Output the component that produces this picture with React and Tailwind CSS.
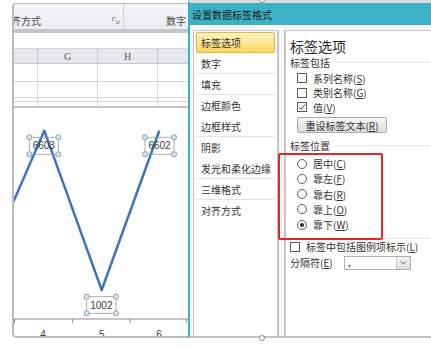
import React from 'react';

const cjk = "font-['Noto_Sans_CJK_SC','Noto_Sans',sans-serif]";

function U({ c }) {
  return <span className="underline decoration-1 underline-offset-[1px]">{c}</span>;
}

function CheckBox({ checked }) {
  return (
    <span className="w-[10px] h-[10px] border border-[#5e5e5e] bg-white flex items-center justify-center shrink-0">
      {checked && (
        <svg width="8" height="8" viewBox="0 0 8 8">
          <path d="M1 4.2 L3.1 6.3 L7 1.6" fill="none" stroke="#3a3a3a" strokeWidth="1" />
        </svg>
      )}
    </span>
  );
}

function Radio({ checked }) {
  return (
    <span className="w-[10px] h-[10px] rounded-full border border-[#5e5e5e] bg-white flex items-center justify-center shrink-0">
      {checked && <span className="w-[4px] h-[4px] rounded-full bg-[#2e2e2e]" />}
    </span>
  );
}

const nav = [
  { t: '标签选项', sel: true },
  { t: '数字', sep: true },
  { t: '填充', sep: true },
  { t: '边框颜色' },
  { t: '边框样式', sep: true },
  { t: '阴影' },
  { t: '发光和柔化边缘', sep: true },
  { t: '三维格式', sep: true },
  { t: '对齐方式' },
];

function GridRow({ h }) {
  return (
    <div className={`${h} flex shrink-0 border-b border-[#d4d8dd]`}>
      <div className="w-[24px] border-r border-[#d4d8dd]" />
      <div className="w-[60px] border-r border-[#d4d8dd]" />
      <div className="w-[60px] border-r border-[#d4d8dd]" />
      <div className="flex-1" />
    </div>
  );
}

function DataLabel({ x, y, w, h, text }) {
  const hs = [
    [x, y],
    [x + w, y],
    [x, y + h],
    [x + w, y + h],
  ];
  return (
    <g>
      <rect x={x} y={y} width={w} height={h} fill="none" stroke="#9a9a9a" strokeWidth="0.8" />
      <text x={x + w / 2} y={y + h / 2 + 3.6} textAnchor="middle" fontSize="10" fill="#3c3c3c" fontFamily="'Liberation Sans', Arial, sans-serif">
        {text}
      </text>
      {hs.map(([cx, cy], i) => (
        <circle key={i} cx={cx} cy={cy} r="2.6" fill="#d3e4f1" stroke="#74a3ca" strokeWidth="0.9" />
      ))}
    </g>
  );
}

function Chart() {
  return (
    <svg className="absolute inset-0" width="175" height="228" viewBox="0 0 175 228">
      <polyline
        points="-12,120 30.3,22.7 87.7,182 145.3,22.7"
        fill="none"
        stroke="#3f74bf"
        strokeWidth="2.5"
        strokeLinejoin="round"
      />
      <DataLabel x={15.3} y={29.3} w={29} h={17} text="6603" />
      <DataLabel x={131} y={29.3} w={29} h={17} text="6602" />
      <DataLabel x={72.7} y={188.7} w={29.3} h={16.6} text="1002" />
      <line x1="0" y1="211" x2="175" y2="211" stroke="#8c8c8c" strokeWidth="1" />
      {[0.5, 58.7, 116, 172.7].map((t, i) => (
        <line key={i} x1={t} y1="211" x2={t} y2="215" stroke="#8c8c8c" strokeWidth="1" />
      ))}
      {[
        [29, '4'],
        [87.7, '5'],
        [145, '6'],
      ].map(([x, s]) => (
        <text key={s} x={x} y="230" textAnchor="middle" fontSize="10" fill="#404040" fontFamily="'Liberation Sans', Arial, sans-serif">
          {s}
        </text>
      ))}
    </svg>
  );
}

export default function App() {
  return (
    <div className={`relative w-[431px] h-[349px] bg-white overflow-hidden ${cjk}`}>
      {/* spreadsheet window */}
      <div className="pl-[12px] pt-[3px]">
        <div className="w-[177px] h-[335px] border-l-2 border-t border-b-2 border-[#b8bbbf] rounded-tl-[4px] rounded-bl-[5px] overflow-hidden flex flex-col">
          {/* ribbon */}
          <div className="h-[25px] shrink-0 flex bg-linear-to-b from-[#f7f8fa] to-[#e9ecf0] text-[10px] text-[#4a4a4a]">
            <div className="w-[109px] flex items-end justify-between pb-[1px] overflow-hidden">
              <span className="-ml-[3px] leading-[14px]">齐方式</span>
              <svg width="8" height="7" viewBox="0 0 8 7" className="mr-[3px] mb-[4px]">
                <path d="M0.5 0.5 H4 M0.5 0.5 V4" stroke="#9ea3a8" strokeWidth="1" fill="none" />
                <path d="M3 3 L7 6.5 M7 3.5 V6.5 H4" stroke="#9ea3a8" strokeWidth="1" fill="none" />
              </svg>
            </div>
            <div className="w-px bg-[#cdd1d6]" />
            <div className="flex-1 flex items-end pb-[1px] pl-[42px]">
              <span className="leading-[14px]">数字</span>
            </div>
          </div>
          <div className="h-[4px] shrink-0 bg-[#c3c7cc]" />
          <div className="h-[16px] shrink-0 bg-white border-b border-[#cfd3d8]" />
          {/* column header */}
          <div className="h-[15px] shrink-0 flex bg-[#e5e9ee] border-b border-[#c5c9ce] text-[10px] text-[#555] font-['Liberation_Serif',serif]">
            <div className="w-[24px] border-r border-[#c5c9ce]" />
            <div className="w-[60px] border-r border-[#c5c9ce] flex items-center justify-center">G</div>
            <div className="w-[60px] border-r border-[#c5c9ce] flex items-center justify-center">H</div>
            <div className="flex-1" />
          </div>
          <GridRow h="h-[18px]" />
          <GridRow h="h-[16px]" />
          <GridRow h="h-[4px]" />
          <div className="h-[4px] shrink-0 flex">
            <div className="w-[24px] border-r border-[#d4d8dd]" />
            <div className="w-[60px] border-r border-[#d4d8dd]" />
            <div className="w-[60px] border-r border-[#d4d8dd]" />
          </div>
          <div className="h-[2px] shrink-0 bg-[#c6c6c6]" />
          <div className="relative flex-1 bg-white">
            <Chart />
          </div>
        </div>
      </div>

      {/* dialog */}
      <div className="absolute left-[188px] top-0 right-0 h-[338px] border-t-[3px] border-t-[#dcdcdc] border-l-2 border-l-[#3bb2c4] border-b-2 border-b-[#c4c4c4] bg-[#f7f7f7] flex flex-col">
        <div className="h-[22px] shrink-0 bg-[#3bb2c4] flex items-center pl-[2px] text-[10px] text-[#1c1c1c]">
          设置数据标签格式
        </div>
        <div className="flex-1 flex pt-[5px] pl-[3px] gap-[5px] min-h-0">
          {/* nav */}
          <div className="w-[86px] h-full bg-white border-l border-t border-r-2 border-[#c6c6c6] px-[2px] pt-px flex flex-col">
            {nav.map((n) => (
              <div
                key={n.t}
                className={`h-[21px] shrink-0 flex items-center text-[10px] text-[#333] ${
                  n.sel
                    ? 'pl-[4px] bg-linear-to-b from-[#fff4c2] to-[#ffd660] border border-[#e3b64c] rounded-[2px]'
                    : 'pl-[5px]'
                } ${n.sep ? 'border-b border-[#e3e3e3]' : ''}`}
              >
                {n.t}
              </div>
            ))}
          </div>
          {/* right panel */}
          <div className="flex-1 h-full bg-white border-l-2 border-t border-[#c6c6c6] pl-[4px] pt-[7px] flex flex-col text-[10px] text-[#333]">
            <div className="h-[16px] leading-[16px] text-[14px] text-[#2a2a2a]">标签选项</div>
            <div className="mt-px h-[14px] flex items-center gap-[5px]">
              <span>标签包括</span>
              <span className="flex-1 h-px bg-[#e4e4e4]" />
            </div>
            <div className="mt-[2px] h-[14.5px] flex items-center pl-[7px] gap-[6px]">
              <CheckBox />
              <span>
                系列名称(<U c="S" />)
              </span>
            </div>
            <div className="h-[14.5px] flex items-center pl-[7px] gap-[6px]">
              <CheckBox />
              <span>
                类别名称(<U c="G" />)
              </span>
            </div>
            <div className="h-[14.5px] flex items-center pl-[7px] gap-[6px]">
              <CheckBox checked />
              <span>
                值(<U c="V" />)
              </span>
            </div>
            <div className="ml-[7px] mt-[2.5px] w-[90px] h-[16px] shrink-0 border border-[#adadad] rounded-[2px] bg-linear-to-b from-[#f8f8f8] to-[#dcdcdc] flex items-center justify-center">
              <span>
                重设标签文本(<U c="R" />)
              </span>
            </div>
            <div className="mt-[5px] h-[14px] flex items-center gap-[5px]">
              <span>标签位置</span>
              <span className="flex-1 h-px bg-[#e4e4e4]" />
            </div>
            <div className="mt-[4px] flex flex-col">
              {[
                ['居中', 'C', false],
                ['靠左', 'F', false],
                ['靠右', 'R', false],
                ['靠上', 'O', false],
                ['靠下', 'W', true],
              ].map(([t, k, c]) => (
                <div key={t} className="h-[15.25px] flex items-center pl-[7px] gap-[6px]">
                  <Radio checked={c} />
                  <span>
                    {t}(<U c={k} />)
                  </span>
                </div>
              ))}
            </div>
            <div className="mt-[5.5px] h-px bg-[#e6e6e6]" />
            <div className="mt-px h-[14px] flex items-center gap-[6px]">
              <CheckBox />
              <span>
                标签中包括图例项标示(<U c="L" />)
              </span>
            </div>
            <div className="mt-[2px] h-[14px] flex items-center">
              <span className="w-[54px]">
                分隔符(<U c="E" />)
              </span>
              <div className="w-[67px] h-[13.5px] border border-[#a9b0b8] bg-white flex">
                <span className="flex-1 pl-[3px] leading-[10px] text-[10px]">,</span>
                <span className="w-[14px] h-full border-l border-[#c9cdd2] bg-linear-to-b from-[#f3f3f3] to-[#dedede] flex items-center justify-center">
                  <svg width="7" height="5" viewBox="0 0 7 5">
                    <path d="M0.5 0.8 L3.5 4 L6.5 0.8" fill="none" stroke="#6a6a6a" strokeWidth="1" />
                  </svg>
                </span>
              </div>
            </div>
          </div>
        </div>
      </div>

      {/* chart selection handles peeking above/below the dialog */}
      <div className="absolute left-[259px] top-[-3px] w-[6px] h-[6px] rounded-full border border-[#8a8a8a] bg-white" />
      <div className="absolute left-[259px] top-[335px] w-[6px] h-[6px] rounded-full border border-[#8a8a8a] bg-white" />

      {/* red annotation box */}
      <div className="absolute left-[278px] top-[153px] w-[105px] h-[87px] border-2 border-[#e4262b] rounded-[2px]" />
    </div>
  );
}
